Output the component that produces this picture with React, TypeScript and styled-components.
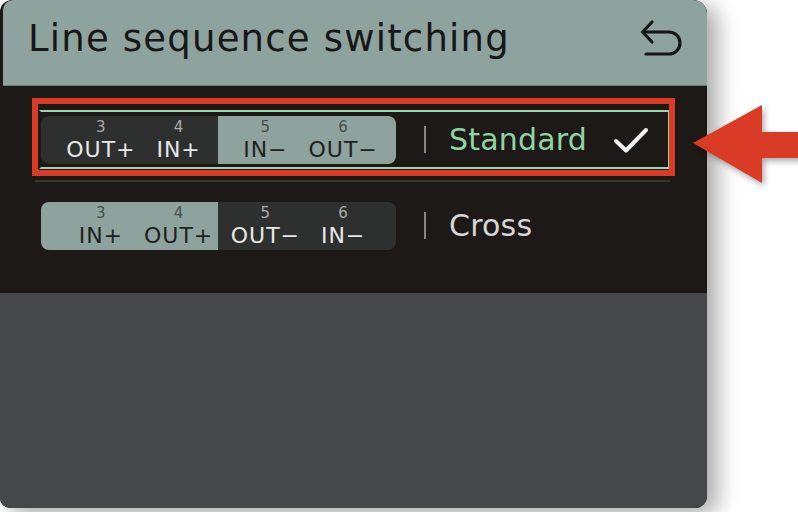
import styled, { createGlobalStyle } from "styled-components";

const GlobalStyle = createGlobalStyle`
  html, body {
    margin: 0;
    padding: 0;
    background: #ffffff;
  }
  * {
    box-sizing: border-box;
  }
`;

const Stage = styled.div`
  position: relative;
  width: 798px;
  height: 512px;
  overflow: hidden;
  background: #ffffff;
  font-family: "DejaVu Sans", "Liberation Sans", sans-serif;
`;

const Screen = styled.div`
  width: 707px;
  height: 508px;
  display: flex;
  flex-direction: column;
  background: #1c1917;
  border-radius: 12px 14px 12px 10px;
  overflow: hidden;
  box-shadow: 10px 6px 22px rgba(0, 0, 0, 0.35);
`;

const Header = styled.header`
  height: 86px;
  margin-left: 3px;
  display: flex;
  align-items: flex-start;
  justify-content: space-between;
  padding: 17px 23px 0 25px;
  background: #8fa39e;
  border-radius: 10px 14px 0 0;
  border-bottom: 1px solid #6f807b;
`;

const Title = styled.h1`
  margin: 0;
  font-size: 37px;
  font-weight: 400;
  letter-spacing: 1.2px;
  color: #161817;
`;

const BackButton = styled.button`
  margin-top: 1px;
  padding: 0;
  border: none;
  background: none;
  display: flex;
`;

const List = styled.section`
  height: 207px;
  padding: 24px 37px 0 39px;
  display: flex;
  flex-direction: column;
`;

const Row = styled.div<{ $selected?: boolean }>`
  position: relative;
  height: 59px;
  display: flex;
  align-items: center;
  border: 2px solid ${(p) => (p.$selected ? "#9bd6a6" : "transparent")};
  border-left-color: transparent;
`;

const Separator = styled.div`
  height: 2px;
  margin: 11px 0 14px -4px;
  background: #383635;
`;

const Pill = styled.div`
  width: 355px;
  height: 48px;
  display: flex;
  border-radius: 8px;
  overflow: hidden;
`;

const Half = styled.div<{ $light: boolean; $side: "left" | "right" }>`
  flex: 1;
  display: grid;
  grid-template-columns: 1fr 1fr;
  padding: ${(p) => (p.$side === "left" ? "0 0 0 21px" : "0 14px 0 9px")};
  background: ${(p) => (p.$light ? "#8fa39e" : "#2e302f")};
  color: ${(p) => (p.$light ? "#1d2220" : "#e8e8e8")};
`;

const Pin = styled.div`
  display: flex;
  flex-direction: column;
  align-items: center;
  justify-content: center;
  gap: 4px;
  padding-top: 1px;
`;

const PinNumber = styled.span<{ $light: boolean }>`
  font-size: 15px;
  line-height: 15px;
  color: ${(p) => (p.$light ? "#46504c" : "#a9abaa")};
`;

const PinLabel = styled.span`
  font-size: 22px;
  line-height: 22px;
  letter-spacing: 1px;
  white-space: nowrap;
`;

const Divider = styled.span`
  width: 2px;
  height: 27px;
  margin-left: 28px;
  background: #858585;
`;

const ModeName = styled.span<{ $selected?: boolean }>`
  margin-left: 23px;
  font-size: 30px;
  letter-spacing: 0.2px;
  color: ${(p) => (p.$selected ? "#8fd4a2" : "#d6d6d6")};
`;

const Check = styled.svg`
  margin-left: auto;
  margin-right: 19px;
`;

const Highlight = styled.div`
  position: absolute;
  top: -14px;
  left: -9px;
  right: -7px;
  bottom: -9px;
  border: 6px solid #d93b27;
  pointer-events: none;
`;

const Lower = styled.div`
  flex: 1;
  background: #45474a;
`;

const Pointer = styled.svg`
  position: absolute;
  left: 692px;
  top: 104px;
  filter: drop-shadow(2px 3px 3px rgba(0, 0, 0, 0.35));
`;

type PinDef = { num: string; label: string };

const modes: {
  name: string;
  selected: boolean;
  lightFirst: boolean;
  pins: PinDef[];
}[] = [
  {
    name: "Standard",
    selected: true,
    lightFirst: false,
    pins: [
      { num: "3", label: "OUT+" },
      { num: "4", label: "IN+" },
      { num: "5", label: "IN−" },
      { num: "6", label: "OUT−" },
    ],
  },
  {
    name: "Cross",
    selected: false,
    lightFirst: true,
    pins: [
      { num: "3", label: "IN+" },
      { num: "4", label: "OUT+" },
      { num: "5", label: "OUT−" },
      { num: "6", label: "IN−" },
    ],
  },
];

const PinHalf = ({
  pins,
  light,
  side,
}: {
  pins: PinDef[];
  light: boolean;
  side: "left" | "right";
}) => (
  <Half $light={light} $side={side}>
    {pins.map((pin) => (
      <Pin key={pin.num}>
        <PinNumber $light={light}>{pin.num}</PinNumber>
        <PinLabel>{pin.label}</PinLabel>
      </Pin>
    ))}
  </Half>
);

const App = () => {
  return (
    <>
      <GlobalStyle />
      <Stage>
        <Screen>
          <Header>
            <Title>Line sequence switching</Title>
            <BackButton aria-label="Back">
              <svg width="44" height="40" viewBox="0 0 44 40" fill="none">
                <path
                  d="M12 4 L2.5 14 L12 24 M2.5 14 H29 A11 11 0 0 1 29 36 H6"
                  stroke="#141615"
                  strokeWidth="3.2"
                  strokeLinecap="round"
                  strokeLinejoin="round"
                />
              </svg>
            </BackButton>
          </Header>
          <List>
            {modes.map((mode, i) => (
              <div key={mode.name}>
                {i > 0 && <Separator />}
                <Row $selected={mode.selected}>
                  <Pill>
                    <PinHalf pins={mode.pins.slice(0, 2)} light={mode.lightFirst} side="left" />
                    <PinHalf pins={mode.pins.slice(2)} light={!mode.lightFirst} side="right" />
                  </Pill>
                  <Divider />
                  <ModeName $selected={mode.selected}>{mode.name}</ModeName>
                  {mode.selected && (
                    <Check width="36" height="28" viewBox="0 0 36 28" fill="none">
                      <path
                        d="M3 15 L13 24.5 L33 4"
                        stroke="#f2f2f2"
                        strokeWidth="4"
                        strokeLinecap="round"
                        strokeLinejoin="round"
                      />
                    </Check>
                  )}
                  {mode.selected && <Highlight />}
                </Row>
              </div>
            ))}
          </List>
          <Lower />
        </Screen>
        <Pointer width="108" height="82" viewBox="0 0 108 82">
          <polygon points="1,39 70,1 70,28 108,28 108,54 70,54 70,79" fill="#d93b27" />
        </Pointer>
      </Stage>
    </>
  );
};

export default App;
